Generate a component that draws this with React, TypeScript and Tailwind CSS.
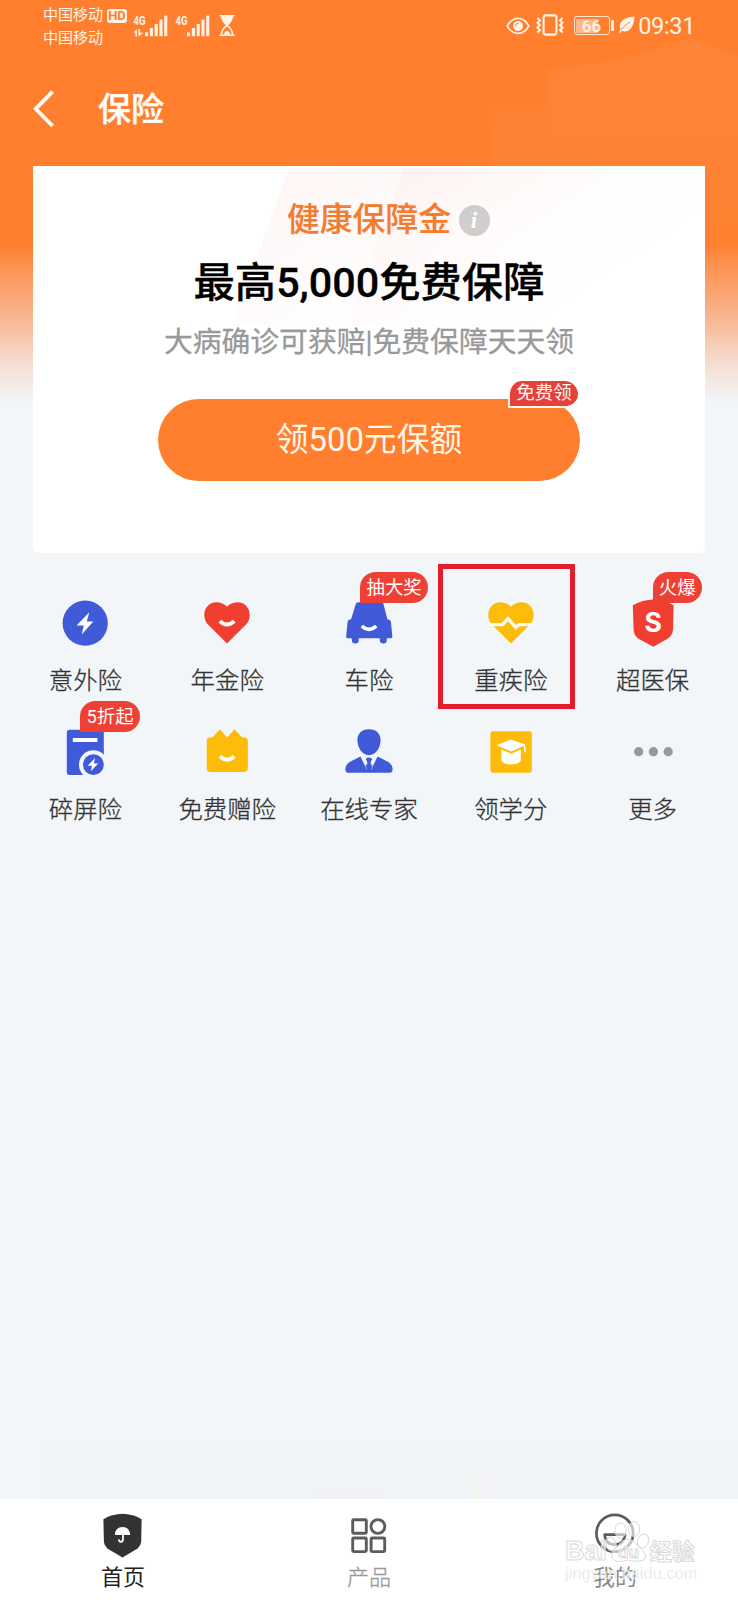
import React from "react";

const HEART = "M24 44.5 L5 25.6 C-2.6 17.2 2 3.2 13.4 3.2 C17.6 3.2 21.4 4.8 24 7.8 C26.6 4.8 30.4 3.2 34.6 3.2 C46 3.2 50.6 17.2 43 25.6 Z";
const BOLT = "M28.3 13.2 L15.6 26.4 L22.8 26.4 L20.7 35.6 L32.3 22.6 L25.8 22.4 Z";

function Icon({ children }: { children: React.ReactNode }) {
  return (
    <svg viewBox="0 0 48 48" className="block h-12 w-12 shrink-0" fill="none">
      {children}
    </svg>
  );
}

const icons = {
  accident: (
    <Icon>
      <circle cx="24.2" cy="24.2" r="22.6" fill="#405ad8" />
      <path d={BOLT} fill="#fff" />
    </Icon>
  ),
  annuity: (
    <Icon>
      <path d={HEART} fill="#f03f31" />
      <path d="M16.8 22.2 Q24 28.8 31.2 22.2" stroke="#fff" strokeWidth="3.8" />
    </Icon>
  ),
  car: (
    <Icon>
      <path
        d="M13 3.2 H36.4 Q38 3.2 38.5 5 L42.4 20.6 H43.6 Q45.6 20.8 45.9 23 L47.4 37.6 Q47.4 39.2 45.8 39.2 H2.6 Q1 39.2 1.1 37.6 L2.6 23 Q2.8 20.8 4.8 20.6 H6 L10.8 5 Q11.4 3.2 13 3.2 Z"
        fill="#405ad8"
      />
      <rect x="6.8" y="34" width="7" height="10.6" rx="3.5" fill="#405ad8" />
      <rect x="34.8" y="34" width="7" height="10.6" rx="3.5" fill="#405ad8" />
      <path d="M16.8 27 Q24 33.6 31.2 27" stroke="#fff" strokeWidth="3.6" />
    </Icon>
  ),
  illness: (
    <Icon>
      <path d={HEART} fill="#fdbc0a" />
      <path d="M-1 25.6 H15.6 L21 19.6 L28.8 28.4 L32.2 25.6 H49" stroke="#f8f8f5" strokeWidth="3.4" />
    </Icon>
  ),
  medical: (
    <Icon>
      <path d="M24.3 .4 Q35 .6 44.6 6.2 L44 31 Q43.4 36.6 38.6 39.8 L24.3 47.8 L9.6 39.8 Q5 36.6 4.6 31 L3.8 6.2 Q14 .6 24.3 .4 Z" fill="#f03f31" />
      <text x="24.2" y="32.6" textAnchor="middle" fontSize="26.5" fontWeight="700" fill="#fff" className="font-[Inter,sans-serif]">
        S
      </text>
    </Icon>
  ),
  screen: (
    <Icon>
      <rect x="5.8" y="1.7" width="37" height="45.3" rx="3" fill="#405ad8" />
      <rect x="11.8" y="10" width="24.6" height="4" fill="#fff" />
      <circle cx="32.4" cy="36.7" r="14.4" fill="#f2f6f9" />
      <circle cx="32.4" cy="36.7" r="10.4" fill="#405ad8" />
      <path d="M34 30 L26.6 37.8 L31 37.8 L29.8 43.2 L37.2 35.6 L33 35.4 Z" fill="#fff" />
    </Icon>
  ),
  gift: (
    <Icon>
      <path d="M7 9.6 L9.6 9.2 L16.8 1.2 L24.2 9.4 L31.5 1.2 L39 9.2 L41.6 9.6 Q44.8 10 44.8 13 V40.6 Q44.8 43.9 41.5 43.9 H7 Q3.7 43.9 3.7 40.6 V13 Q3.7 10 7 9.6 Z" fill="#fdbc0a" />
      <path d="M17 28.4 Q24.2 35 31.2 28.4" stroke="#fff" strokeWidth="3.8" />
    </Icon>
  ),
  expert: (
    <Icon>
      <path d="M24 1.2 C31.6 1.2 35.8 6 35.6 12.6 C35.4 20.4 30.6 27.2 24 27.2 C17.4 27.2 12.6 20.4 12.4 12.6 C12.2 6 16.4 1.2 24 1.2 Z" fill="#405ad8" />
      <path d="M15.4 28.6 L20.2 38.2 L22.4 34.6 L20.8 30.8 Q24 28.4 27.2 30.8 L25.6 34.6 L27.8 38.2 L32.6 28.6 L43.4 34 Q47.4 36.6 47.6 41 Q47.6 44.8 45 44.8 H3 Q.4 44.8 .4 41 Q.6 36.6 4.6 34 Z" fill="#405ad8" />
      <path d="M22.4 35.4 L20.6 38.6 L21.6 41.5 M25.6 35.4 L27.4 38.6 L26.4 41.5" stroke="#f2f6f9" strokeWidth=".5" />
    </Icon>
  ),
  study: (
    <Icon>
      <rect x="3.4" y="3.2" width="41.4" height="41.6" rx="3" fill="#fdbc0a" />
      <path d="M9.6 17.2 L24 11.4 L38.8 16.8 L24.4 23.6 Z" fill="#fff" />
      <path d="M14.4 21.4 L24.4 25.8 L33.8 21.6 V33 Q31.4 36.4 24.2 36.4 Q17 36.4 14.4 33 Z" fill="#fff" />
      <path d="M36.6 17 Q38.2 18 37.9 24.4" stroke="#fff" strokeWidth="1.7" />
    </Icon>
  ),
  more: (
    <Icon>
      <circle cx="9.7" cy="23.7" r="4.6" fill="#989898" />
      <circle cx="24.4" cy="23.7" r="4.6" fill="#989898" />
      <circle cx="39.2" cy="23.7" r="4.6" fill="#989898" />
    </Icon>
  ),
};

type Item = { label: string; icon: React.ReactNode; tag?: string; tagClass?: string; marked?: boolean };

const items: Item[] = [
  { label: "意外险", icon: icons.accident },
  { label: "年金险", icon: icons.annuity },
  { label: "车险", icon: icons.car, tag: "抽大奖", tagClass: "left-[62px] w-[68px]" },
  { label: "重疾险", icon: icons.illness, marked: true },
  { label: "超医保", icon: icons.medical, tag: "火爆", tagClass: "left-[71px] w-[49px]" },
  { label: "碎屏险", icon: icons.screen, tag: "5折起", tagClass: "left-[65.5px] w-[60px]" },
  { label: "免费赠险", icon: icons.gift },
  { label: "在线专家", icon: icons.expert },
  { label: "领学分", icon: icons.study },
  { label: "更多", icon: icons.more },
];

function Signal({ arrows }: { arrows?: boolean }) {
  return (
    <svg viewBox="0 -3 36 27" className="block h-[27px] w-9" fill="#fff3e6">
      <text x="0.6" y="10" fontSize="12" fontWeight="700" textLength="12" lengthAdjust="spacingAndGlyphs" className="font-[Roboto,sans-serif]">
        4G
      </text>
      {arrows && <path d="M0.4 17.6 L4 14 V21.4 H2.4 V17.6 Z M5.4 14 H7 V17.8 H10.4 L5.4 21.4 Z" />}
      <rect x="12" y="17.4" width="3" height="3.8" />
      <rect x="16.8" y="13" width="3.1" height="8.2" />
      <rect x="21.6" y="9" width="3.1" height="12.2" />
      <rect x="26.4" y="4.6" width="3.1" height="16.6" />
      <rect x="31.2" y="0.6" width="3.1" height="20.6" />
    </svg>
  );
}

function StatusBar() {
  return (
    <div className="flex h-[52px] items-start text-[#fff3e6]">
      <div className="ml-[43px] mt-[4px] w-[64px] text-[15.1px] leading-[22.5px] tracking-[-0.1px]">
        <div>中国移动</div>
        <div>中国移动</div>
      </div>
      <div className="mt-[9px] h-[14px] w-[20px] rounded-[3px] bg-[#fff3e6] text-center text-[13px] leading-[14.5px] font-bold text-[#ff7f2f]">HD</div>
      <div className="ml-[6px] mt-[11.5px]">
        <Signal arrows />
      </div>
      <div className="ml-[6px] mt-[11.5px]">
        <Signal />
      </div>
      <svg viewBox="0 0 16 22" className="ml-[8px] mt-[15px] h-[22px] w-4" fill="none">
        <path d="M.5 .8 H15.5 M.5 20.2 H15.5" stroke="#fff3e6" strokeWidth="1.6" />
        <path d="M2 1 H14 Q14 6.4 9 10.4 H7 Q2 6.4 2 1 Z" fill="#fff3e6" />
        <path d="M2.4 20 Q2.4 14.4 8 10.4 Q13.6 14.4 13.6 20" stroke="#fff3e6" strokeWidth="1.5" />
        <path d="M4.6 20 Q5.4 16.4 8 15.6 Q10.6 16.4 11.4 20 Z" fill="#fff3e6" />
      </svg>
      <div className="flex-1" />
      <svg viewBox="0 0 24 18" className="mt-[17px] h-[18px] w-6" fill="none">
        <path d="M1.2 9 Q5.4 1.4 12 1.4 Q18.6 1.4 22.8 9 Q18.6 16.4 12 16.4 Q5.4 16.4 1.2 9 Z" stroke="#fff3e6" strokeWidth="1.7" />
        <circle cx="12" cy="9" r="5" fill="#fff3e6" />
        <path d="M9.6 9 Q9.6 6.4 12 6.2" stroke="#ff7f2f" strokeWidth="1" />
      </svg>
      <svg viewBox="0 0 28 22" className="ml-[6px] mt-[14px] h-[22px] w-7" fill="none" stroke="#fff3e6">
        <rect x="7.6" y="1.4" width="12.8" height="19.2" rx="2" strokeWidth="2.1" />
        <path d="M1.4 4 L4 6.4 L1.4 8.8 L4 11.2 L1.4 13.6 L4 16 L1.4 18.4 M26.6 4 L24 6.4 L26.6 8.8 L24 11.2 L26.6 13.6 L24 16 L26.6 18.4" strokeWidth="2" />
      </svg>
      <div className="ml-[10px] mt-[16px] h-[19px] w-[36px] rounded-[3px] border border-[#ffe3cc] p-[1.5px]">
        <div className="h-full w-[22px] bg-[#ffb98a] pl-[5.5px] text-[17px] leading-[15px] font-medium text-[#fff3e6]">66</div>
      </div>
      <div className="ml-[1px] mt-[20px] h-[11px] w-[3px] rounded-[1px] bg-[#fff3e6]" />
      <svg viewBox="0 0 18 18" className="ml-[4px] mt-[16px] h-[18px] w-[18px]">
        <path d="M16.6 .6 Q4.4 1.6 2 8 Q1 11.2 2.4 13.4 L.6 16.6 L2 17 L3.6 14.8 Q8.4 17 12.4 13 Q16 9 16.6 .6 Z" fill="#fff3e6" />
        <path d="M3 14 Q6.4 9 12 6" stroke="#ff7f2f" strokeWidth=".9" fill="none" />
      </svg>
      <div className="mr-[43px] ml-[2.5px] mt-[12px] text-[23.6px] leading-[28px] tracking-[-0.4px]">09:31</div>
    </div>
  );
}

function Watermark() {
  return (
    <svg viewBox="0 0 140 75" className="pointer-events-none absolute top-[15px] right-[36px] h-[75px] w-[140px]" fill="#fff" fillOpacity=".6" stroke="#dadada" strokeWidth="1">
      <ellipse cx="49" cy="30" rx="5" ry="7" transform="rotate(-14 49 30)" />
      <ellipse cx="58.5" cy="16.5" rx="5.6" ry="7.6" />
      <ellipse cx="72" cy="15" rx="5.6" ry="7.4" />
      <ellipse cx="81" cy="27" rx="5.4" ry="7.2" transform="rotate(20 81 27)" />
      <path d="M66 25 Q71 25 75 31 Q86 39 83 45 Q78 49 66 46 Q53 50 50 44 Q48 38 56 32 Q61 25 66 25 Z" />
      <g className="font-['Liberation_Sans','Noto_Sans_CJK_SC',sans-serif]" fontWeight="700">
        <text x="3" y="46" fontSize="28" textLength="42" lengthAdjust="spacingAndGlyphs">Bai</text>
        <text x="56" y="44" fontSize="17">du</text>
        <text x="87.5" y="45.5" fontSize="22.5">经验</text>
      </g>
      <text x="3" y="65" fontSize="16" textLength="132" fill="#dcdcdc" fillOpacity=".8" stroke="#fff" strokeWidth=".3" className="font-['Liberation_Sans',sans-serif]">
        jingyan.baidu.com
      </text>
    </svg>
  );
}

export default function App() {
  return (
    <div className="relative flex h-[1600px] w-[738px] flex-col overflow-hidden bg-[#f2f6f9] font-[Roboto,'Noto_Sans_CJK_SC',sans-serif]">
      <div className="absolute inset-x-0 top-0 h-[402px] bg-[linear-gradient(180deg,#ff7f2f_0,#ff7f2f_246px,#fc8f4b_262px,#f8b690_318px,#f4ddd0_362px,#f2f6f9_402px)]">
        <svg viewBox="0 0 738 402" className="block h-full w-full">
          <defs>
            <linearGradient id="glow" x1="0" y1="0" x2="0" y2="1">
              <stop offset="0" stopColor="#fff" stopOpacity=".045" />
              <stop offset="1" stopColor="#fff" stopOpacity="0" />
            </linearGradient>
          </defs>
          <path d="M489 107 L548 102 L560 300 H500 Z" fill="url(#glow)" opacity=".6" />
          <path d="M547 70 Q630 62 690 38 Q712 48 738 56 V320 H555 Z" fill="url(#glow)" />
        </svg>
      </div>

      <header className="relative">
        <StatusBar />
        <div className="flex h-[114px] items-center">
          <svg viewBox="0 0 22 38" className="ml-[33px] h-[38px] w-[22px]" fill="none">
            <path d="M19.6 1.6 L2.6 18.8 L19.6 36" stroke="#fff" strokeWidth="3.8" />
          </svg>
          <h1 className="mt-[1px] ml-[43px] text-[33px] leading-[44px] font-medium text-white [-webkit-text-stroke:0.4px_#fff]">保险</h1>
        </div>
      </header>

      <section className="relative mx-[33px] flex h-[387px] flex-col items-center overflow-hidden rounded-b-[6px] bg-white">
        <svg viewBox="0 0 672 387" className="absolute inset-0 h-full w-full">
          <defs>
            <linearGradient id="sheen" gradientUnits="userSpaceOnUse" x1="300" y1="0" x2="430" y2="200">
              <stop offset="0" stopColor="#fdefed" />
              <stop offset="1" stopColor="#fff" stopOpacity="0" />
            </linearGradient>
            <linearGradient id="sheen2" gradientUnits="userSpaceOnUse" x1="380" y1="0" x2="500" y2="170">
              <stop offset="0" stopColor="#fdeeec" />
              <stop offset="1" stopColor="#fff" stopOpacity="0" />
            </linearGradient>
          </defs>
          <path d="M256 2 H672 V160 H199 Z" fill="url(#sheen)" opacity=".5" />
          <path d="M371 2 H672 V160 H314 Z" fill="url(#sheen2)" opacity=".6" />
        </svg>
        <div className="relative mt-[32px] flex h-[44px] items-center pl-[39px]">
          <span className="text-[32.8px] leading-[44px] font-medium text-[#f47c2e] [-webkit-text-stroke:0.2px_#f47c2e]">健康保障金</span>
          <span className="ml-[8px] flex h-[31px] w-[31px] items-center justify-center rounded-full bg-[#d0cdcd] pr-[1px] font-['Liberation_Serif',serif] text-[23px] leading-none font-bold text-white italic">i</span>
        </div>
        <h2 className="relative mt-[12.5px] text-[41.3px] leading-[56px] font-medium whitespace-nowrap text-black [-webkit-text-stroke:0.3px_#000]">最高5,000免费保障</h2>
        <p className="relative mt-[11.5px] text-[28.8px] leading-[40px] whitespace-nowrap text-[#999] [-webkit-text-stroke:0.3px_#999]">大病确诊可获赔|免费保障天天领</p>
        <button className="relative mt-[37px] h-[82px] w-[422px] rounded-full bg-[#ff7f2f] text-[32.8px] leading-[83px] text-[#fff6e8]">
          领500元保额
          <span className="absolute top-[-18px] right-[2px] h-[27px] w-[70px] rounded-t-[14px] rounded-br-[14px] border-b-2 border-l-2 border-[#fff6ee] bg-[#e5413c] text-[18.5px] leading-[25px] whitespace-nowrap text-[#fff6ee]">免费领</span>
        </button>
      </section>

      <main className="grid grid-cols-5 px-[14.5px] pt-[45.5px]">
        {items.map((item) => (
          <div key={item.label} className="relative flex h-[129.4px] flex-col items-center">
            {item.icon}
            <span className="mt-[16px] text-[24.4px] leading-[36px] font-light whitespace-nowrap text-[#333] [-webkit-text-stroke:0.3px_#333]">{item.label}</span>
            {item.tag && (
              <span className={`absolute top-[-26.5px] h-[31px] rounded-t-[15.5px] rounded-br-[15.5px] bg-[#ef4035] text-center text-[18.4px] leading-[31px] whitespace-nowrap text-white ${item.tagClass}`}>
                {item.tag}
              </span>
            )}
            {item.marked && <span className="absolute top-[-34.5px] left-[-2px] h-[145px] w-[137px] border-[5px] border-[#e31e2a]" />}
          </div>
        ))}
      </main>

      <div className="flex-1" />
      <div className="flex h-[58px] items-stretch opacity-60">
        <div className="w-[40px]" />
        <div className="w-[274px] bg-[linear-gradient(180deg,#f2f6f9,#ecf3f6)]" />
        <div className="w-[70px] bg-[linear-gradient(180deg,#f2f6f9,#f1f1f7)]" />
        <div className="w-[88px] bg-[linear-gradient(180deg,#f2f6f9,#ecf3f6)]" />
        <div className="w-[6px] bg-[linear-gradient(180deg,#f2f6f9,#f6f6e8)]" />
        <div className="w-[26px] bg-[linear-gradient(180deg,#f2f6f9,#f2f2f6)]" />
        <div className="flex-1 bg-[linear-gradient(180deg,#f2f6f9,#ecf3f6)]" />
      </div>

      <nav className="relative grid h-[101px] grid-cols-3 bg-white pt-[13px] text-[22px] leading-[35px]">
        <div className="flex flex-col items-center text-[#222]">
          <Icon>
            <path d="M23.5 1.8 Q33.6 2 42.6 7.2 L42.2 30 Q41.8 33.8 38.6 36.4 L23.5 45.6 L8.4 36.4 Q5.2 33.8 4.9 30 L4.4 7.2 Q13.4 2 23.5 1.8 Z" fill="#333" />
            <path d="M15.8 23 Q16.4 15 23.5 15 Q30.6 15 31.2 23 Z" fill="#fff" />
            <path d="M24 22 V27.4 Q23.8 29.8 21.8 29.8 Q20 29.6 19.8 27.4" stroke="#fff" strokeWidth="1.8" />
          </Icon>
          <span>首页</span>
        </div>
        <div className="flex flex-col items-center text-[#999]">
          <Icon>
            <g stroke="#5c5c5c" strokeWidth="2.9">
              <rect x="7.7" y="7.7" width="13.6" height="13.6" rx="1" />
              <rect x="7.7" y="26" width="13.6" height="13.6" rx="1" />
              <rect x="26.1" y="26" width="13.6" height="13.6" rx="1" />
              <circle cx="32.9" cy="14.5" r="6.9" />
            </g>
          </Icon>
          <span className="font-light [-webkit-text-stroke:0.3px_#999]">产品</span>
        </div>
        <div className="flex flex-col items-center text-[#888]">
          <Icon>
            <circle cx="23.8" cy="21.2" r="18.4" stroke="#5c5c5c" strokeWidth="2.7" />
            <path d="M13.6 22.6 H34 Q33 32.6 23.8 32.6 Q14.6 32.6 13.6 22.6 Z" stroke="#5c5c5c" strokeWidth="2.7" strokeLinejoin="round" />
          </Icon>
          <span>我的</span>
        </div>
        <Watermark />
      </nav>
    </div>
  );
}
